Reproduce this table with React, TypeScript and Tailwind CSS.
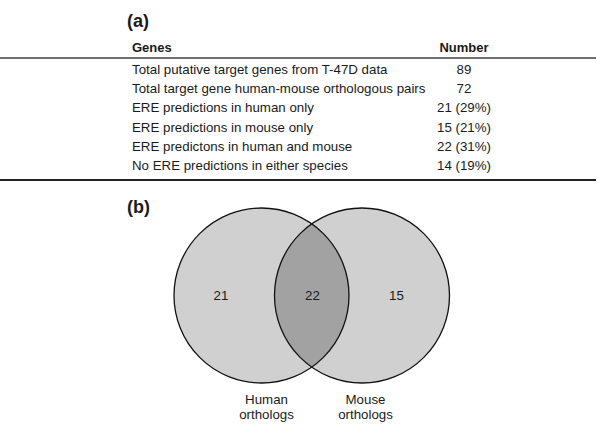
import React from "react";

const rows: [string, string][] = [
  ["Total putative target genes from T-47D data", "89"],
  ["Total target gene human-mouse orthologous pairs", "72"],
  ["ERE predictions in human only", "21 (29%)"],
  ["ERE predictions in mouse only", "15 (21%)"],
  ["ERE predictons in human and mouse", "22 (31%)"],
  ["No ERE predictions in either species", "14 (19%)"],
];

export default function App() {
  return (
    <div
      className="w-[600px] h-[438px] bg-white text-[#1a1a1a] overflow-hidden"
      style={{ fontFamily: '"Liberation Sans", Arial, sans-serif' }}
    >
      <div className="pt-[12px] pl-[127px] text-[18px] leading-[18px] font-bold">(a)</div>
      <div className="mt-[8px] w-[596px]">
        <div className="h-[19px] flex items-center pl-[132px] text-[13px] font-bold border-b-2 border-[#6e6e6e] box-content">
          <div className="w-[302px]">Genes</div>
          <div className="w-[60px] text-center">Number</div>
        </div>
        <div className="pt-[1px] pb-[3px] border-b-2 border-[#222]">
          {rows.map(([g, n]) => (
            <div key={g} className="h-[19.3px] flex items-center pl-[132px] text-[13.3px]">
              <div className="w-[302px] whitespace-nowrap">{g}</div>
              <div className="w-[60px] text-center whitespace-nowrap">{n}</div>
            </div>
          ))}
        </div>
      </div>
      <div className="mt-[17px] flex items-start">
        <div className="pl-[127px] w-[172px] text-[18px] leading-[18px] font-bold">(b)</div>
        <svg width="280" height="180" viewBox="0 0 280 180" className="mt-[8px] block">
          <defs>
            <clipPath id="leftClip">
              <circle cx="89.5" cy="89.5" r="87.5" />
            </clipPath>
          </defs>
          <circle cx="89.5" cy="89.5" r="87.5" fill="#d0d0d0" />
          <circle cx="190" cy="89.5" r="87.5" fill="#d0d0d0" />
          <circle cx="190" cy="89.5" r="87.5" fill="#a2a2a2" clipPath="url(#leftClip)" />
          <circle cx="89.5" cy="89.5" r="87.5" fill="none" stroke="#111" strokeWidth="1.3" />
          <circle cx="190" cy="89.5" r="87.5" fill="none" stroke="#111" strokeWidth="1.3" />
          <text x="49" y="94" textAnchor="middle" fontSize="13.3" fill="#1a1a1a" fontFamily="Liberation Sans, Arial, sans-serif">21</text>
          <text x="140.5" y="94" textAnchor="middle" fontSize="13.3" fill="#1a1a1a" fontFamily="Liberation Sans, Arial, sans-serif">22</text>
          <text x="224.5" y="94" textAnchor="middle" fontSize="13.3" fill="#1a1a1a" fontFamily="Liberation Sans, Arial, sans-serif">15</text>
        </svg>
      </div>
      <div className="mt-[6px] flex pl-[217px] text-[13.3px] leading-[15px] text-center">
        <div className="w-[99px]">Human<br />orthologs</div>
        <div className="w-[99px]">Mouse<br />orthologs</div>
      </div>
    </div>
  );
}
